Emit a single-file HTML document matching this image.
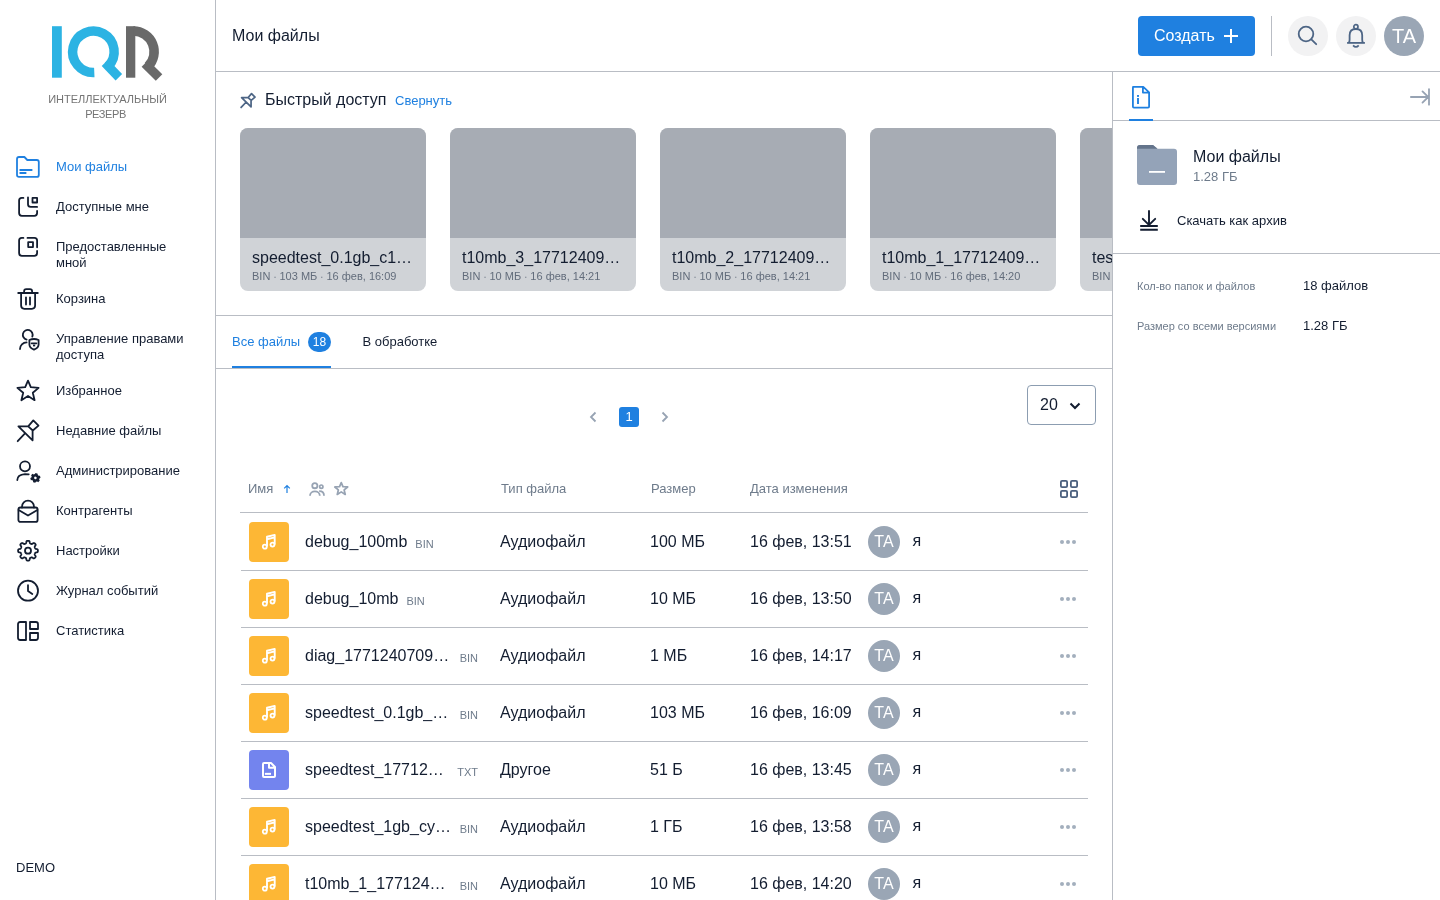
<!DOCTYPE html>
<html lang="ru"><head><meta charset="utf-8"><style>
*{box-sizing:border-box;margin:0;padding:0}
html,body{width:1440px;height:900px;overflow:hidden;background:#fff}
body{font-family:"Liberation Sans",sans-serif;color:#131d30;position:relative;will-change:transform}
.a{position:absolute}
svg{display:block;overflow:visible;position:absolute}
.t{position:absolute;white-space:nowrap}
.f13{font-size:13px;line-height:16px}
.f16{font-size:16px;line-height:24px}
.f11{font-size:11px;line-height:16px}
.g{color:#6e7b8b}
.card{position:absolute;top:128px;width:186px;height:163px;border-radius:8px;overflow:hidden;background:#d0d3d7}
.card .img{position:absolute;left:0;top:0;width:186px;height:110px;background:#a7acb4}
.card .nm{position:absolute;left:12px;top:117.5px;font-size:16px;line-height:24px;white-space:nowrap;color:#131d30}
.card .mt{position:absolute;left:12px;top:140.2px;font-size:11px;line-height:16px;white-space:nowrap;color:#626c7b}
.ico{position:absolute;left:249px;width:40px;height:40px;border-radius:4px;background:#fdb735}
.ico.p{background:#7384ee}
.rl{position:absolute;left:240px;width:848px;height:1px;background:#b9bdc4}
.av{position:absolute;width:32px;height:32px;border-radius:50%;background:#9aa6b5;color:#fff;font-size:16px;line-height:32px;text-align:center}
.dots{position:absolute;left:1060px;width:16px;height:4px}
.dots i{position:absolute;top:0;width:4px;height:4px;border-radius:50%;background:#a3afbd}
</style></head><body>
<div class="a" style="left:215px;top:0;width:1px;height:900px;background:#b9bdc4"></div>
<svg style="left:0;top:0" width="216" height="130" viewBox="0 0 216 130">
<rect x="52" y="26.2" width="9.8" height="51.5" fill="#2cb3e3"/>
<path d="M94.3 72.53 A20.75 20.75 0 1 1 108.07 66.47" fill="none" stroke="#2cb3e3" stroke-width="9.5"/>
<polygon points="101.7,66.1 108.2,59.6 122.1,74.0 115.6,80.5" fill="#2cb3e3"/>
<rect x="126" y="26.2" width="9.3" height="51.5" fill="#696969"/>
<path d="M133.4 31.05 A20.75 20.75 0 0 1 148.07 66.47" fill="none" stroke="#696969" stroke-width="9.5"/>
<polygon points="141.6,66.7 148.1,60.2 162.3,74.2 155.8,80.7" fill="#696969"/>
</svg>
<div class="t" style="left:0;width:215px;text-align:center;top:90.7px;font-size:11px;line-height:16px;color:#747474">ИНТЕЛЛЕКТУАЛЬНЫЙ</div>
<div class="t" style="left:0;width:215px;text-align:center;top:106.2px;font-size:11px;line-height:16px;color:#747474;letter-spacing:-0.4px;margin-left:-2px">РЕЗЕРВ</div>
<svg style="left:16px;top:154px" width="24" height="24" viewBox="0 0 24 24"><path d="M1 5 Q1 3 3 3 H8.4 L11.3 6 H20.8 Q22.8 6 22.8 8 V20.9 Q22.8 22.9 20.8 22.9 H3 Q1 22.9 1 20.9 Z M4.2 16 H15.7 M4.2 19 H9.7" fill="none" stroke="#1f80e0" stroke-width="1.8" stroke-linecap="round" stroke-linejoin="round"/></svg>
<div class="t f13" style="left:56px;top:158.5px;color:#1f80e0">Мои файлы</div>
<svg style="left:16px;top:194px" width="24" height="24" viewBox="0 0 24 24"><path d="M7.4 3.9 H5.8 Q3.1 3.9 3.1 6.6 V19.1 Q3.1 21.8 5.8 21.8 H18.4 Q21.1 21.8 21.1 19.1 V17 M12 3.5 V10.2 Q12 12.9 14.7 12.9 H21.1" fill="none" stroke="#131d30" stroke-width="1.8" stroke-linecap="round" stroke-linejoin="round"/><rect x="16.5" y="3.9" width="4.6" height="4.6" fill="none" stroke="#131d30" stroke-width="1.8" stroke-linecap="round" stroke-linejoin="round" stroke-linecap="butt" stroke-linejoin="miter"/></svg>
<div class="t f13" style="left:56px;top:198.5px;color:#131d30">Доступные мне</div>
<svg style="left:16px;top:234px" width="24" height="24" viewBox="0 0 24 24"><path d="M7.4 3.9 H5.8 Q3.1 3.9 3.1 6.6 V19.1 Q3.1 21.8 5.8 21.8 H18.4 Q21.1 21.8 21.1 19.1 V17 M11.5 3.9 H18.4 Q21.1 3.9 21.1 6.6 V13.3" fill="none" stroke="#131d30" stroke-width="1.8" stroke-linecap="round" stroke-linejoin="round"/><rect x="12.2" y="8.1" width="4.8" height="5" fill="none" stroke="#131d30" stroke-width="1.8" stroke-linecap="round" stroke-linejoin="round" stroke-linecap="butt" stroke-linejoin="miter"/></svg>
<div class="t f13" style="left:56px;top:238.5px;color:#131d30">Предоставленные</div>
<div class="t f13" style="left:56px;top:254.5px;color:#131d30">мной</div>
<svg style="left:16px;top:286px" width="24" height="24" viewBox="0 0 24 24"><path d="M2.2 7 H21.8 M8.1 7 V5.3 Q8.1 3.1 10.3 3.1 H13.9 Q16.1 3.1 16.1 5.3 V7 M5.1 7 V19.6 Q5.1 22.8 8.3 22.8 H15.9 Q19.1 22.8 19.1 19.6 V7 M10 11.3 V18.6 M14 11.3 V18.6" fill="none" stroke="#131d30" stroke-width="1.8" stroke-linecap="round" stroke-linejoin="round"/></svg>
<div class="t f13" style="left:56px;top:290.5px;color:#131d30">Корзина</div>
<svg style="left:16px;top:326px" width="24" height="24" viewBox="0 0 24 24"><path d="M16.3 10.6 A4.9 4.9 0 1 0 10.6 13.6 M10.6 16.4 A6.6 6.6 0 0 0 4 23" fill="none" stroke="#131d30" stroke-width="1.8" stroke-linecap="round" stroke-linejoin="round"/><path d="M13.4 14 Q18 12 22.6 14 V18.5 Q22.6 21.8 18 23.7 Q13.4 21.8 13.4 18.5 Z" fill="none" stroke="#131d30" stroke-width="1.8" stroke-linecap="round" stroke-linejoin="round"/><path d="M15.6 17.3 H20.4" fill="none" stroke="#131d30" stroke-width="1.8" stroke-linecap="round" stroke-linejoin="round"/><rect x="17" y="18.6" width="2.2" height="1.8" fill="#131d30"/></svg>
<div class="t f13" style="left:56px;top:330.5px;color:#131d30">Управление правами</div>
<div class="t f13" style="left:56px;top:346.5px;color:#131d30">доступа</div>
<svg style="left:16px;top:378px" width="24" height="24" viewBox="0 0 24 24"><path d="M12 2.6 L14.8 9.2 L22.6 9.9 L16.8 14.8 L18.6 22.2 L12 18 L5.4 22.2 L7.2 14.8 L1.4 9.9 L9.2 9.2 Z" fill="none" stroke="#131d30" stroke-width="1.8" stroke-linecap="round" stroke-linejoin="round"/></svg>
<div class="t f13" style="left:56px;top:382.5px;color:#131d30">Избранное</div>
<svg style="left:16px;top:418px" width="24" height="24" viewBox="0 0 24 24"><path d="M17.3 2.4 L22.5 7.6 L16.8 12.5 L12.2 8.3 Z M12.2 8.3 H2.4 L16.6 22.3 V12.5 M9 15.4 L1.7 23.2" fill="none" stroke="#131d30" stroke-width="1.8" stroke-linecap="round" stroke-linejoin="round"/></svg>
<div class="t f13" style="left:56px;top:422.5px;color:#131d30">Недавние файлы</div>
<svg style="left:16px;top:458px" width="24" height="24" viewBox="0 0 24 24"><circle cx="9" cy="8.3" r="5" fill="none" stroke="#131d30" stroke-width="1.8" stroke-linecap="round" stroke-linejoin="round"/><path d="M12.7 16.4 Q11 16.1 9 16.1 Q1.3 16.8 1.3 22.1" fill="none" stroke="#131d30" stroke-width="1.8" stroke-linecap="round" stroke-linejoin="round"/><g transform="translate(19.5 19.6) rotate(15)"><path d="M-1.1 -4.4 H1.1 L1.5 -3.2 L2.6 -2.6 L3.8 -3 L4.9 -1.1 L4 -0.2 V0.9 L4.9 1.8 L3.8 3.7 L2.6 3.3 L1.5 3.9 L1.1 5.1 H-1.1 L-1.5 3.9 L-2.6 3.3 L-3.8 3.7 L-4.9 1.8 L-4 0.9 V-0.2 L-4.9 -1.1 L-3.8 -3 L-2.6 -2.6 L-1.5 -3.2 Z" fill="#131d30"/><circle cx="0" cy="0.35" r="1.3" fill="#fff"/></g></svg>
<div class="t f13" style="left:56px;top:462.5px;color:#131d30">Администрирование</div>
<svg style="left:16px;top:498px" width="24" height="24" viewBox="0 0 24 24"><path d="M6 9.5 V8.7 A6 6 0 0 1 18 8.7 V9.5" fill="none" stroke="#131d30" stroke-width="1.8" stroke-linecap="round" stroke-linejoin="round"/><rect x="2.4" y="9.5" width="19.2" height="14.4" rx="2" fill="none" stroke="#131d30" stroke-width="1.8" stroke-linecap="round" stroke-linejoin="round"/><path d="M2.6 12 L12 17.6 L21.4 12" fill="none" stroke="#131d30" stroke-width="1.8" stroke-linecap="round" stroke-linejoin="round"/></svg>
<div class="t f13" style="left:56px;top:502.5px;color:#131d30">Контрагенты</div>
<svg style="left:16px;top:538px" width="24" height="24" viewBox="0 0 24 24"><path d="M12.00 2.80 L12.26 2.81 L12.52 2.83 L12.77 2.87 L13.03 2.95 L13.26 3.10 L13.47 3.39 L13.64 3.87 L13.75 4.46 L13.86 4.95 L14.00 5.25 L14.16 5.42 L14.33 5.53 L14.51 5.62 L14.69 5.70 L14.87 5.77 L15.05 5.85 L15.23 5.92 L15.42 5.98 L15.62 6.03 L15.86 6.02 L16.17 5.90 L16.59 5.64 L17.09 5.30 L17.54 5.07 L17.90 5.02 L18.17 5.08 L18.40 5.20 L18.62 5.35 L18.81 5.52 L19.00 5.70 L19.18 5.89 L19.35 6.08 L19.50 6.30 L19.62 6.53 L19.68 6.80 L19.63 7.16 L19.40 7.61 L19.06 8.11 L18.80 8.53 L18.68 8.84 L18.67 9.08 L18.72 9.28 L18.78 9.47 L18.85 9.65 L18.93 9.83 L19.00 10.01 L19.08 10.19 L19.17 10.37 L19.28 10.54 L19.45 10.70 L19.75 10.84 L20.24 10.95 L20.83 11.06 L21.31 11.23 L21.60 11.44 L21.75 11.67 L21.83 11.93 L21.87 12.18 L21.89 12.44 L21.90 12.70 L21.89 12.96 L21.87 13.22 L21.83 13.47 L21.75 13.73 L21.60 13.96 L21.31 14.17 L20.83 14.34 L20.24 14.45 L19.75 14.56 L19.45 14.70 L19.28 14.86 L19.17 15.03 L19.08 15.21 L19.00 15.39 L18.93 15.57 L18.85 15.75 L18.78 15.93 L18.72 16.12 L18.67 16.32 L18.68 16.56 L18.80 16.87 L19.06 17.29 L19.40 17.79 L19.63 18.24 L19.68 18.60 L19.62 18.87 L19.50 19.10 L19.35 19.32 L19.18 19.51 L19.00 19.70 L18.81 19.88 L18.62 20.05 L18.40 20.20 L18.17 20.32 L17.90 20.38 L17.54 20.33 L17.09 20.10 L16.59 19.76 L16.17 19.50 L15.86 19.38 L15.62 19.37 L15.42 19.42 L15.23 19.48 L15.05 19.55 L14.87 19.63 L14.69 19.70 L14.51 19.78 L14.33 19.87 L14.16 19.98 L14.00 20.15 L13.86 20.45 L13.75 20.94 L13.64 21.53 L13.47 22.01 L13.26 22.30 L13.03 22.45 L12.77 22.53 L12.52 22.57 L12.26 22.59 L12.00 22.60 L11.74 22.59 L11.48 22.57 L11.23 22.53 L10.97 22.45 L10.74 22.30 L10.53 22.01 L10.36 21.53 L10.25 20.94 L10.14 20.45 L10.00 20.15 L9.84 19.98 L9.67 19.87 L9.49 19.78 L9.31 19.70 L9.13 19.63 L8.95 19.55 L8.77 19.48 L8.58 19.42 L8.38 19.37 L8.14 19.38 L7.83 19.50 L7.41 19.76 L6.91 20.10 L6.46 20.33 L6.10 20.38 L5.83 20.32 L5.60 20.20 L5.38 20.05 L5.19 19.88 L5.00 19.70 L4.82 19.51 L4.65 19.32 L4.50 19.10 L4.38 18.87 L4.32 18.60 L4.37 18.24 L4.60 17.79 L4.94 17.29 L5.20 16.87 L5.32 16.56 L5.33 16.32 L5.28 16.12 L5.22 15.93 L5.15 15.75 L5.07 15.57 L5.00 15.39 L4.92 15.21 L4.83 15.03 L4.72 14.86 L4.55 14.70 L4.25 14.56 L3.76 14.45 L3.17 14.34 L2.69 14.17 L2.40 13.96 L2.25 13.73 L2.17 13.47 L2.13 13.22 L2.11 12.96 L2.10 12.70 L2.11 12.44 L2.13 12.18 L2.17 11.93 L2.25 11.67 L2.40 11.44 L2.69 11.23 L3.17 11.06 L3.76 10.95 L4.25 10.84 L4.55 10.70 L4.72 10.54 L4.83 10.37 L4.92 10.19 L5.00 10.01 L5.07 9.83 L5.15 9.65 L5.22 9.47 L5.28 9.28 L5.33 9.08 L5.32 8.84 L5.20 8.53 L4.94 8.11 L4.60 7.61 L4.37 7.16 L4.32 6.80 L4.38 6.53 L4.50 6.30 L4.65 6.08 L4.82 5.89 L5.00 5.70 L5.19 5.52 L5.38 5.35 L5.60 5.20 L5.83 5.08 L6.10 5.02 L6.46 5.07 L6.91 5.30 L7.41 5.64 L7.83 5.90 L8.14 6.02 L8.38 6.03 L8.58 5.98 L8.77 5.92 L8.95 5.85 L9.13 5.77 L9.31 5.70 L9.49 5.62 L9.67 5.53 L9.84 5.42 L10.00 5.25 L10.14 4.95 L10.25 4.46 L10.36 3.87 L10.53 3.39 L10.74 3.10 L10.97 2.95 L11.23 2.87 L11.48 2.83 L11.74 2.81 Z" fill="none" stroke="#131d30" stroke-width="1.8" stroke-linecap="round" stroke-linejoin="round"/><circle cx="12" cy="12.7" r="3" fill="none" stroke="#131d30" stroke-width="1.8" stroke-linecap="round" stroke-linejoin="round"/></svg>
<div class="t f13" style="left:56px;top:542.5px;color:#131d30">Настройки</div>
<svg style="left:16px;top:578px" width="24" height="24" viewBox="0 0 24 24"><circle cx="12" cy="12.7" r="10" fill="none" stroke="#131d30" stroke-width="1.8" stroke-linecap="round" stroke-linejoin="round"/><path d="M12 7.2 V13 L16.3 16" fill="none" stroke="#131d30" stroke-width="1.8" stroke-linecap="round" stroke-linejoin="round"/></svg>
<div class="t f13" style="left:56px;top:582.5px;color:#131d30">Журнал событий</div>
<svg style="left:16px;top:618px" width="24" height="24" viewBox="0 0 24 24"><path d="M10 4 H4.2 Q2 4 2 6.2 V19.8 Q2 22 4.2 22 H10 Z M14 4 H19.8 Q22 4 22 6.2 V11 H14 Z M14 15 H22 V19.8 Q22 22 19.8 22 H14 Z" fill="none" stroke="#131d30" stroke-width="1.8" stroke-linecap="round" stroke-linejoin="round" stroke-linejoin="miter"/></svg>
<div class="t f13" style="left:56px;top:622.5px;color:#131d30">Статистика</div>
<div class="t f13" style="left:16px;top:860.2px">DEMO</div>
<div class="a" style="left:216px;top:71px;width:1224px;height:1px;background:#b9bdc4"></div>
<div class="t f16" style="left:232px;top:24.3px">Мои файлы</div>
<div class="a" style="left:1138px;top:16px;width:117px;height:40px;border-radius:4px;background:#1f80e0"></div>
<div class="t f16" style="left:1154px;top:24.3px;color:#fff">Создать</div>
<svg style="left:1224px;top:29px" width="14" height="14" viewBox="0 0 14 14"><path d="M7 0 V14 M0 7 H14" stroke="#fff" stroke-width="2"/></svg>
<div class="a" style="left:1271px;top:16px;width:1px;height:40px;background:#b9bdc4"></div>
<div class="a" style="left:1288px;top:16px;width:40px;height:40px;border-radius:50%;background:#f2f2f3"></div>
<svg style="left:1288px;top:16px" width="40" height="40" viewBox="0 0 40 40"><circle cx="18" cy="18" r="7.3" fill="none" stroke="#4d6585" stroke-width="1.8"/><path d="M23.3 23.3 L28.2 28.2" stroke="#4d6585" stroke-width="1.8" stroke-linecap="round"/></svg>
<div class="a" style="left:1336px;top:16px;width:40px;height:40px;border-radius:50%;background:#f2f2f3"></div>
<svg style="left:1336px;top:16px" width="40" height="40" viewBox="0 0 40 40"><circle cx="19.9" cy="10.8" r="2.1" fill="none" stroke="#4d6585" stroke-width="1.7"/><path d="M12.9 26.6 Q13.6 25.5 13.6 23.5 V19.3 Q13.6 13 19.9 13 Q26.2 13 26.2 19.3 V23.5 Q26.2 25.5 26.9 26.6" fill="none" stroke="#4d6585" stroke-width="1.8"/><path d="M11.1 26.9 H28.9" stroke="#4d6585" stroke-width="1.8"/><path d="M17.1 29.3 Q19.9 32.4 22.7 29.3" fill="none" stroke="#4d6585" stroke-width="1.8"/></svg>
<div class="a" style="left:1384px;top:16px;width:40px;height:40px;border-radius:50%;background:#9aa6b5;color:#fff;font-size:20px;line-height:40px;text-align:center">TA</div>
<svg style="left:239.5px;top:91.5px" width="16" height="16" viewBox="0 0 24 24"><path d="M17.3 2.4 L22.5 7.6 L16.8 12.5 L12.2 8.3 Z M12.2 8.3 H2.4 L16.6 22.3 V12.5 M9 15.4 L1.7 23.2" fill="none" stroke="#4d6585" stroke-width="2.6" stroke-linecap="round" stroke-linejoin="round"/></svg>
<div class="t f16" style="left:265px;top:88.2px">Быстрый доступ</div>
<div class="t f13" style="left:395px;top:93.4px;color:#1f80e0">Свернуть</div>
<div class="a" style="left:216px;top:72px;width:896px;height:243px;overflow:hidden">
<div class="card" style="left:24px;top:56px"><div class="img"></div><div class="nm">speedtest_0.1gb_c1…</div><div class="mt">BIN ∙ 103 МБ ∙ 16 фев, 16:09</div></div>
<div class="card" style="left:234px;top:56px"><div class="img"></div><div class="nm">t10mb_3_17712409…</div><div class="mt">BIN ∙ 10 МБ ∙ 16 фев, 14:21</div></div>
<div class="card" style="left:444px;top:56px"><div class="img"></div><div class="nm">t10mb_2_17712409…</div><div class="mt">BIN ∙ 10 МБ ∙ 16 фев, 14:21</div></div>
<div class="card" style="left:654px;top:56px"><div class="img"></div><div class="nm">t10mb_1_17712409…</div><div class="mt">BIN ∙ 10 МБ ∙ 16 фев, 14:20</div></div>
<div class="card" style="left:864px;top:56px"><div class="img"></div><div class="nm">test_file_1771240…</div><div class="mt">BIN ∙ 10 МБ ∙ 16 фев, 14:20</div></div>
</div>
<div class="a" style="left:216px;top:315px;width:896px;height:1px;background:#b9bdc4"></div>
<div class="t f13" style="left:232px;top:334.3px;color:#1f80e0">Все файлы</div>
<div class="a" style="left:308px;top:332px;width:23px;height:20px;border-radius:10px;background:#1f80e0;color:#fff;font-size:12px;line-height:20px;text-align:center">18</div>
<div class="t f13" style="left:362.5px;top:334.3px">В обработке</div>
<div class="a" style="left:216px;top:368px;width:896px;height:1px;background:#b9bdc4"></div>
<div class="a" style="left:232px;top:366px;width:99px;height:2px;background:#1f80e0"></div>
<svg style="left:588px;top:410px" width="12" height="14" viewBox="0 0 12 14"><path d="M7.5 2.5 L3 7 L7.5 11.5" fill="none" stroke="#97a3b3" stroke-width="1.8"/></svg>
<div class="a" style="left:619px;top:407px;width:20px;height:20px;border-radius:3px;background:#1f80e0;color:#fff;font-size:13px;line-height:20px;text-align:center">1</div>
<svg style="left:659px;top:410px" width="12" height="14" viewBox="0 0 12 14"><path d="M3.5 2.5 L8 7 L3.5 11.5" fill="none" stroke="#97a3b3" stroke-width="1.8"/></svg>
<div class="a" style="left:1027px;top:385px;width:69px;height:40px;border-radius:4px;border:1px solid #8c9db1"></div>
<div class="t f16" style="left:1040px;top:392.5px">20</div>
<svg style="left:1068px;top:400px" width="14" height="12" viewBox="0 0 14 12"><path d="M2.5 3.5 L7 8 L11.5 3.5" fill="none" stroke="#131d30" stroke-width="2"/></svg>
<div class="t f13 g" style="left:248px;top:480.5px">Имя</div>
<svg style="left:282px;top:481px" width="10" height="14" viewBox="0 0 10 14"><path d="M5 4.8 V12 M2.2 7.4 L5 4.6 L7.8 7.4" fill="none" stroke="#1f80e0" stroke-width="1.2"/></svg>
<svg style="left:308px;top:480px" width="18" height="18" viewBox="0 0 18 18"><circle cx="6.83" cy="5.67" r="2.6" fill="none" stroke="#97a3b3" stroke-width="1.8"/><circle cx="13.3" cy="6.67" r="1.65" fill="none" stroke="#97a3b3" stroke-width="1.7"/><path d="M2 15.67 A4.9 4.3 0 0 1 11.8 15.67 M11.2 11.2 Q16 11 16 15.67" fill="none" stroke="#97a3b3" stroke-width="1.8"/></svg>
<svg style="left:334px;top:481.3px" width="14.5" height="14.5" viewBox="0 0 24 24"><path d="M12 2.6 L14.8 9.2 L22.6 9.9 L16.8 14.8 L18.6 22.2 L12 18 L5.4 22.2 L7.2 14.8 L1.4 9.9 L9.2 9.2 Z" fill="none" stroke="#97a3b3" stroke-width="2.9" stroke-linejoin="round"/></svg>
<div class="t f13 g" style="left:501px;top:480.5px">Тип файла</div>
<div class="t f13 g" style="left:651px;top:480.5px">Размер</div>
<div class="t f13 g" style="left:750px;top:480.5px">Дата изменения</div>
<svg style="left:1060px;top:480px" width="18" height="18" viewBox="0 0 18 18"><g fill="none" stroke="#4a5f7d" stroke-width="1.8"><rect x="0.9" y="0.9" width="6.2" height="6.2" rx="1.2"/><rect x="10.9" y="0.9" width="6.2" height="6.2" rx="1.2"/><rect x="0.9" y="10.9" width="6.2" height="6.2" rx="1.2"/><rect x="10.9" y="10.9" width="6.2" height="6.2" rx="1.2"/></g></svg>
<div class="rl" style="top:512px"></div>
<div class="ico" style="top:521.5px"><svg style="left:12px;top:12px" width="16" height="16" viewBox="0 0 16 16"><path d="M6 12.4 V2.7 L13.7 0.9 V10.4 M6 5.2 L13.7 3.4" fill="none" stroke="#fff" stroke-width="1.9" stroke-linejoin="round"/><circle cx="3.8" cy="12.7" r="2" fill="none" stroke="#fff" stroke-width="1.8"/><circle cx="11.5" cy="10.6" r="2" fill="none" stroke="#fff" stroke-width="1.8"/></svg></div>
<div class="a" style="left:305px;top:529.5px;width:173px;height:24px;display:flex;align-items:baseline;white-space:nowrap"><span style="font-size:16px;line-height:24px;overflow:hidden;text-overflow:ellipsis;min-width:0">debug_100mb</span><span style="font-size:11px;color:#6e7b8b;margin-left:8px;flex-shrink:0;position:relative;top:1px">BIN</span></div>
<div class="t f16" style="left:500px;top:529.5px">Аудиофайл</div>
<div class="t f16" style="left:650px;top:529.5px">100 МБ</div>
<div class="t f16" style="left:750px;top:529.5px">16 фев, 13:51</div>
<div class="av" style="left:868px;top:525.5px">TA</div>
<div class="t" style="left:912.6px;top:528.5px;font-size:16px;line-height:24px">я</div>
<div class="dots" style="top:539.5px"><i style="left:0"></i><i style="left:6px"></i><i style="left:12px"></i></div>
<div class="rl" style="top:570px;left:241px;width:847px"></div>
<div class="ico" style="top:579.0px"><svg style="left:12px;top:12px" width="16" height="16" viewBox="0 0 16 16"><path d="M6 12.4 V2.7 L13.7 0.9 V10.4 M6 5.2 L13.7 3.4" fill="none" stroke="#fff" stroke-width="1.9" stroke-linejoin="round"/><circle cx="3.8" cy="12.7" r="2" fill="none" stroke="#fff" stroke-width="1.8"/><circle cx="11.5" cy="10.6" r="2" fill="none" stroke="#fff" stroke-width="1.8"/></svg></div>
<div class="a" style="left:305px;top:587.0px;width:173px;height:24px;display:flex;align-items:baseline;white-space:nowrap"><span style="font-size:16px;line-height:24px;overflow:hidden;text-overflow:ellipsis;min-width:0">debug_10mb</span><span style="font-size:11px;color:#6e7b8b;margin-left:8px;flex-shrink:0;position:relative;top:1px">BIN</span></div>
<div class="t f16" style="left:500px;top:587.0px">Аудиофайл</div>
<div class="t f16" style="left:650px;top:587.0px">10 МБ</div>
<div class="t f16" style="left:750px;top:587.0px">16 фев, 13:50</div>
<div class="av" style="left:868px;top:583.0px">TA</div>
<div class="t" style="left:912.6px;top:586.0px;font-size:16px;line-height:24px">я</div>
<div class="dots" style="top:597.0px"><i style="left:0"></i><i style="left:6px"></i><i style="left:12px"></i></div>
<div class="rl" style="top:627px;left:241px;width:847px"></div>
<div class="ico" style="top:636.0px"><svg style="left:12px;top:12px" width="16" height="16" viewBox="0 0 16 16"><path d="M6 12.4 V2.7 L13.7 0.9 V10.4 M6 5.2 L13.7 3.4" fill="none" stroke="#fff" stroke-width="1.9" stroke-linejoin="round"/><circle cx="3.8" cy="12.7" r="2" fill="none" stroke="#fff" stroke-width="1.8"/><circle cx="11.5" cy="10.6" r="2" fill="none" stroke="#fff" stroke-width="1.8"/></svg></div>
<div class="a" style="left:305px;top:644.0px;width:173px;height:24px;display:flex;align-items:baseline;white-space:nowrap"><span style="font-size:16px;line-height:24px;overflow:hidden;text-overflow:ellipsis;min-width:0">diag_1771240709_speed</span><span style="font-size:11px;color:#6e7b8b;margin-left:8px;flex-shrink:0;position:relative;top:1px">BIN</span></div>
<div class="t f16" style="left:500px;top:644.0px">Аудиофайл</div>
<div class="t f16" style="left:650px;top:644.0px">1 МБ</div>
<div class="t f16" style="left:750px;top:644.0px">16 фев, 14:17</div>
<div class="av" style="left:868px;top:640.0px">TA</div>
<div class="t" style="left:912.6px;top:643.0px;font-size:16px;line-height:24px">я</div>
<div class="dots" style="top:654.0px"><i style="left:0"></i><i style="left:6px"></i><i style="left:12px"></i></div>
<div class="rl" style="top:684px;left:241px;width:847px"></div>
<div class="ico" style="top:693.0px"><svg style="left:12px;top:12px" width="16" height="16" viewBox="0 0 16 16"><path d="M6 12.4 V2.7 L13.7 0.9 V10.4 M6 5.2 L13.7 3.4" fill="none" stroke="#fff" stroke-width="1.9" stroke-linejoin="round"/><circle cx="3.8" cy="12.7" r="2" fill="none" stroke="#fff" stroke-width="1.8"/><circle cx="11.5" cy="10.6" r="2" fill="none" stroke="#fff" stroke-width="1.8"/></svg></div>
<div class="a" style="left:305px;top:701.0px;width:173px;height:24px;display:flex;align-items:baseline;white-space:nowrap"><span style="font-size:16px;line-height:24px;overflow:hidden;text-overflow:ellipsis;min-width:0">speedtest_0.1gb_c1771240</span><span style="font-size:11px;color:#6e7b8b;margin-left:8px;flex-shrink:0;position:relative;top:1px">BIN</span></div>
<div class="t f16" style="left:500px;top:701.0px">Аудиофайл</div>
<div class="t f16" style="left:650px;top:701.0px">103 МБ</div>
<div class="t f16" style="left:750px;top:701.0px">16 фев, 16:09</div>
<div class="av" style="left:868px;top:697.0px">TA</div>
<div class="t" style="left:912.6px;top:700.0px;font-size:16px;line-height:24px">я</div>
<div class="dots" style="top:711.0px"><i style="left:0"></i><i style="left:6px"></i><i style="left:12px"></i></div>
<div class="rl" style="top:741px;left:241px;width:847px"></div>
<div class="ico p" style="top:750.0px"><svg style="left:12px;top:12px" width="16" height="16" viewBox="0 0 16 16"><path d="M2 2 Q2 1 3 1 H10 L14 5 V14 Q14 15 13 15 H3 Q2 15 2 14 Z M8 1 V5.8 H14" fill="none" stroke="#fff" stroke-width="2" stroke-linejoin="round"/><rect x="3.9" y="10.85" width="6.1" height="2" fill="#fff"/></svg></div>
<div class="a" style="left:305px;top:758.0px;width:173px;height:24px;display:flex;align-items:baseline;white-space:nowrap"><span style="font-size:16px;line-height:24px;overflow:hidden;text-overflow:ellipsis;min-width:0">speedtest_1771240811</span><span style="font-size:11px;color:#6e7b8b;margin-left:8px;flex-shrink:0;position:relative;top:1px">TXT</span></div>
<div class="t f16" style="left:500px;top:758.0px">Другое</div>
<div class="t f16" style="left:650px;top:758.0px">51 Б</div>
<div class="t f16" style="left:750px;top:758.0px">16 фев, 13:45</div>
<div class="av" style="left:868px;top:754.0px">TA</div>
<div class="t" style="left:912.6px;top:757.0px;font-size:16px;line-height:24px">я</div>
<div class="dots" style="top:768.0px"><i style="left:0"></i><i style="left:6px"></i><i style="left:12px"></i></div>
<div class="rl" style="top:798px;left:241px;width:847px"></div>
<div class="ico" style="top:807.0px"><svg style="left:12px;top:12px" width="16" height="16" viewBox="0 0 16 16"><path d="M6 12.4 V2.7 L13.7 0.9 V10.4 M6 5.2 L13.7 3.4" fill="none" stroke="#fff" stroke-width="1.9" stroke-linejoin="round"/><circle cx="3.8" cy="12.7" r="2" fill="none" stroke="#fff" stroke-width="1.8"/><circle cx="11.5" cy="10.6" r="2" fill="none" stroke="#fff" stroke-width="1.8"/></svg></div>
<div class="a" style="left:305px;top:815.0px;width:173px;height:24px;display:flex;align-items:baseline;white-space:nowrap"><span style="font-size:16px;line-height:24px;overflow:hidden;text-overflow:ellipsis;min-width:0">speedtest_1gb_cycle</span><span style="font-size:11px;color:#6e7b8b;margin-left:8px;flex-shrink:0;position:relative;top:1px">BIN</span></div>
<div class="t f16" style="left:500px;top:815.0px">Аудиофайл</div>
<div class="t f16" style="left:650px;top:815.0px">1 ГБ</div>
<div class="t f16" style="left:750px;top:815.0px">16 фев, 13:58</div>
<div class="av" style="left:868px;top:811.0px">TA</div>
<div class="t" style="left:912.6px;top:814.0px;font-size:16px;line-height:24px">я</div>
<div class="dots" style="top:825.0px"><i style="left:0"></i><i style="left:6px"></i><i style="left:12px"></i></div>
<div class="rl" style="top:855px;left:241px;width:847px"></div>
<div class="ico" style="top:864.0px"><svg style="left:12px;top:12px" width="16" height="16" viewBox="0 0 16 16"><path d="M6 12.4 V2.7 L13.7 0.9 V10.4 M6 5.2 L13.7 3.4" fill="none" stroke="#fff" stroke-width="1.9" stroke-linejoin="round"/><circle cx="3.8" cy="12.7" r="2" fill="none" stroke="#fff" stroke-width="1.8"/><circle cx="11.5" cy="10.6" r="2" fill="none" stroke="#fff" stroke-width="1.8"/></svg></div>
<div class="a" style="left:305px;top:872.0px;width:173px;height:24px;display:flex;align-items:baseline;white-space:nowrap"><span style="font-size:16px;line-height:24px;overflow:hidden;text-overflow:ellipsis;min-width:0">t10mb_1_1771240912</span><span style="font-size:11px;color:#6e7b8b;margin-left:8px;flex-shrink:0;position:relative;top:1px">BIN</span></div>
<div class="t f16" style="left:500px;top:872.0px">Аудиофайл</div>
<div class="t f16" style="left:650px;top:872.0px">10 МБ</div>
<div class="t f16" style="left:750px;top:872.0px">16 фев, 14:20</div>
<div class="av" style="left:868px;top:868.0px">TA</div>
<div class="t" style="left:912.6px;top:871.0px;font-size:16px;line-height:24px">я</div>
<div class="dots" style="top:882.0px"><i style="left:0"></i><i style="left:6px"></i><i style="left:12px"></i></div>
<div class="rl" style="top:912px;left:241px;width:847px"></div>
<div class="a" style="left:1112px;top:72px;width:1px;height:828px;background:#b9bdc4"></div>
<div class="a" style="left:1113px;top:120px;width:327px;height:1px;background:#b9bdc4"></div>
<div class="a" style="left:1129px;top:119px;width:24px;height:2px;background:#1f80e0"></div>
<svg style="left:1128px;top:84px" width="24" height="26" viewBox="0 0 24 26"><path d="M5 2.9 H15.3 L21.1 8.4 V22.6 Q21.1 23.6 20.1 23.6 H5.9 Q4.9 23.6 4.9 22.6 V3.9 Q4.9 2.9 5.9 2.9 Z M14.9 2.9 V8.6 H21.1" fill="none" stroke="#1f80e0" stroke-width="1.8" stroke-linejoin="round"/><path d="M10 14.1 V19.9" stroke="#1f80e0" stroke-width="1.9"/><rect x="9.05" y="11" width="1.9" height="1.9" fill="#1f80e0"/></svg>
<svg style="left:1408px;top:86px" width="24" height="22" viewBox="0 0 24 22"><path d="M2.9 11 H20.6 M14.5 5.4 L20.3 11 L14.5 16.6 M21 3.1 V18.7" fill="none" stroke="#97a3b3" stroke-width="1.8" stroke-linecap="round"/></svg>
<svg style="left:1137px;top:145px" width="40" height="40" viewBox="0 0 40 40"><path d="M0 3 Q0 0 3 0 H16 L20.5 3.8 H37 Q40 3.8 40 6.8 V37 Q40 40 37 40 H3 Q0 40 0 37 Z" fill="#94a3b8"/><path d="M0 3 Q0 0 3 0 H16 L20.5 3.8 H0 Z" fill="#64748b"/><rect x="12" y="26" width="16" height="1.8" fill="#fff"/></svg>
<div class="t f16" style="left:1193px;top:145.4px">Мои файлы</div>
<div class="t f13 g" style="left:1193px;top:169.4px">1.28 ГБ</div>
<svg style="left:1137px;top:208px" width="24" height="26" viewBox="0 0 24 26"><path d="M12 3 V17.5 M5.8 10.8 L12 17 L18.2 10.8" fill="none" stroke="#131d30" stroke-width="1.9" stroke-linecap="round"/><path d="M3.2 18 H20.8 M3.2 21.8 H20.8" fill="none" stroke="#131d30" stroke-width="1.9"/></svg>
<div class="t f13" style="left:1177px;top:212.5px">Скачать как архив</div>
<div class="a" style="left:1113px;top:253px;width:327px;height:1px;background:#b9bdc4"></div>
<div class="t f11 g" style="left:1137px;top:278.4px">Кол-во папок и файлов</div>
<div class="t f13" style="left:1303px;top:277.7px">18 файлов</div>
<div class="t f11 g" style="left:1137px;top:317.7px">Размер со всеми версиями</div>
<div class="t f13" style="left:1303px;top:317.5px">1.28 ГБ</div>
</body></html>
